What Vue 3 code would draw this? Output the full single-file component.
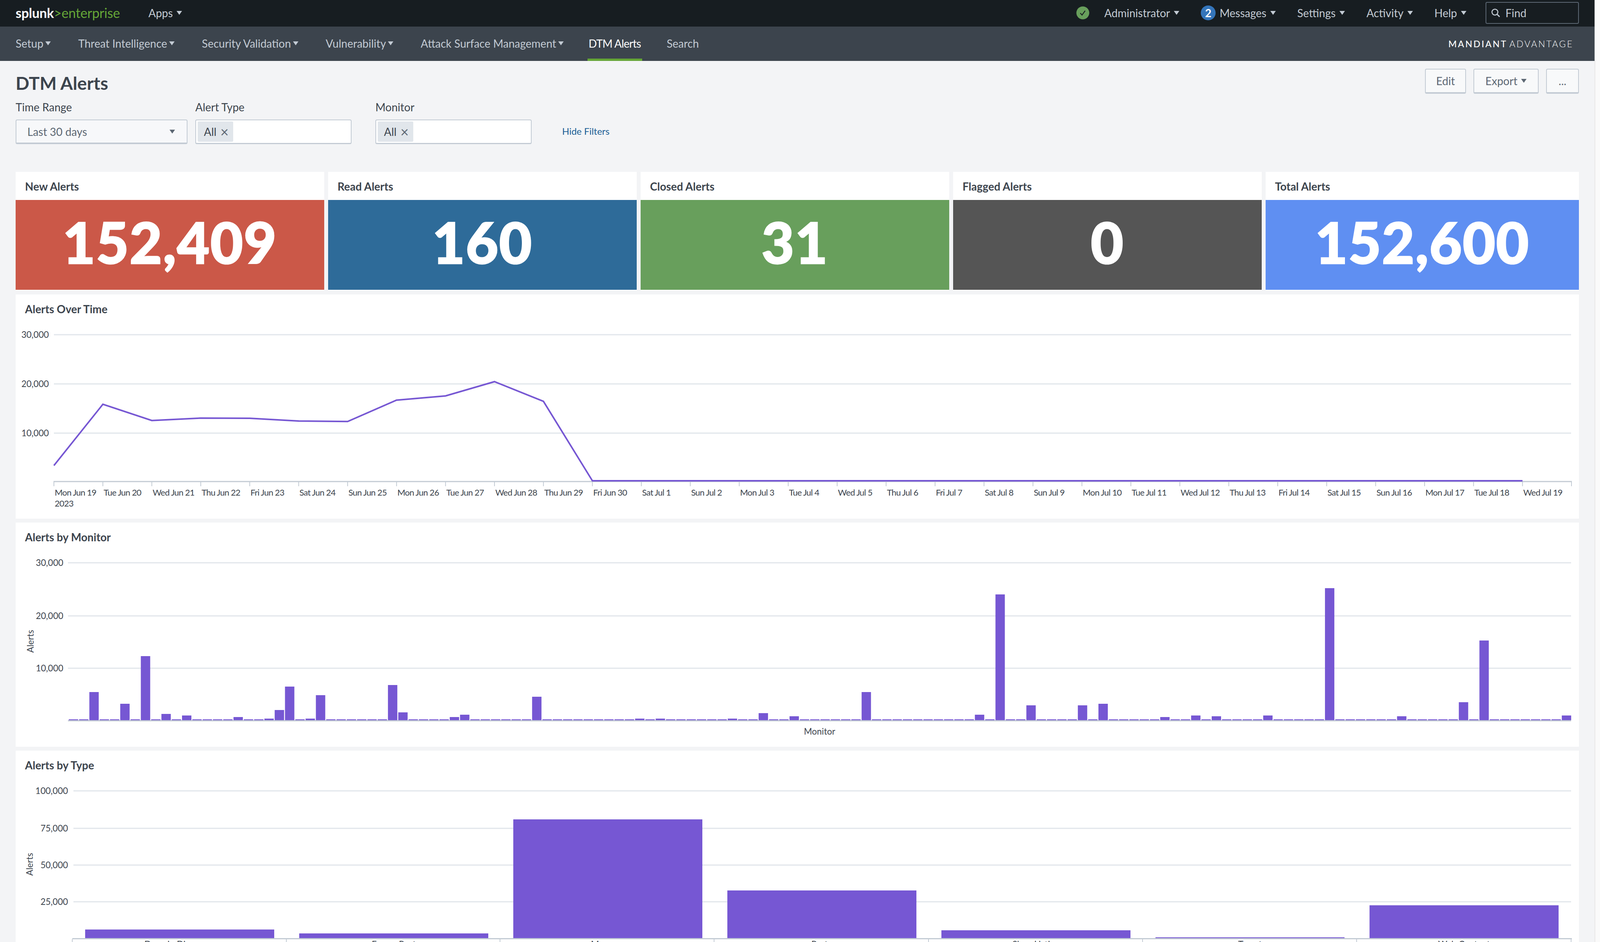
<script setup>
import { computed } from 'vue'

const mainNav = ['Setup', 'Threat Intelligence', 'Security Validation', 'Vulnerability', 'Attack Surface Management']

const stats = [
  { title: 'New Alerts', value: '152,409', color: '#cb5848' },
  { title: 'Read Alerts', value: '160', color: '#2e6b99' },
  { title: 'Closed Alerts', value: '31', color: '#689f5c' },
  { title: 'Flagged Alerts', value: '0', color: '#555555' },
  { title: 'Total Alerts', value: '152,600', color: '#5f8ff2' }
]

// Alerts over time: one point per day from Mon Jun 19
const days = ['Mon', 'Tue', 'Wed', 'Thu', 'Fri', 'Sat', 'Sun']
const timeStep = 125.32
const timeLabels = computed(() => {
  const labels = []
  for (let i = 0; i < 31; i++) {
    const date = i < 12 ? `Jun ${19 + i}` : `Jul ${i - 11}`
    labels.push({ x: 138 + i * timeStep, text: `${days[i % 7]} ${date}` })
  }
  return labels
})
const timeValues = [3250, 15700, 12400, 12900, 12850, 12300, 12200, 16550, 17400, 20300, 16300]
const timePoints = computed(() => {
  const points = []
  for (let i = 0; i < 31; i++) {
    const value = i < timeValues.length ? timeValues[i] : 160
    points.push(`${138 + i * timeStep},${1233 - (value / 10000) * 126}`)
  }
  return points.join(' ')
})

// Alerts by monitor: bar heights in px, everything else is a sliver
const monitorPeaks = {
  2: 72, 5: 42, 7: 164, 9: 16, 11: 12, 16: 8, 19: 4, 20: 26, 21: 86, 23: 4, 24: 64,
  31: 90, 32: 20, 37: 8, 38: 14, 45: 60, 55: 4, 57: 4, 64: 4, 67: 18, 70: 10, 77: 72,
  88: 14, 90: 322, 93: 38, 98: 38, 100: 42, 106: 8, 109: 12, 111: 10, 116: 12, 122: 338,
  129: 10, 135: 46, 137: 204, 145: 12
}
const monitorBars = computed(() => {
  const bars = []
  for (let i = 0; i < 146; i++) {
    const h = monitorPeaks[i] || 2.2
    bars.push({ x: 176 + i * 26.36, y: 1844 - h, h })
  }
  return bars
})

const typeBars = [
  { name: 'Domain Discovery', x: 218, w: 484, top: 2380 },
  { name: 'Forum Post', x: 766, w: 484, top: 2390 },
  { name: 'Message', x: 1314, w: 484, top: 2098 },
  { name: 'Paste', x: 1862, w: 484, top: 2280 },
  { name: 'Shop Listing', x: 2410, w: 484, top: 2382 },
  { name: 'Tweet', x: 2958, w: 484, top: 2400 },
  { name: 'Web Content', x: 3506, w: 484, top: 2318 }
]
const typeTicks = [185, 733, 1280, 1828, 2377, 2925, 3473, 4022]
</script>

<template>
  <div class="page">
    <div class="main">
      <header class="top-bar">
        <div class="logo">
          <span class="logo-splunk">splunk</span><span class="logo-enterprise">&gt;enterprise</span>
        </div>
        <div class="top-item apps">Apps<span class="caret"></span></div>
        <div class="top-right">
          <svg class="status-icon" viewBox="0 0 34 34">
            <circle cx="17" cy="17" r="16.5" fill="#689f5c" />
            <path d="M10.5 17.5l4.5 5 8-11" fill="none" stroke="#171d21" stroke-width="2.2" />
          </svg>
          <div class="top-item admin">Administrator<span class="caret"></span></div>
          <div class="top-item messages">
            <span class="badge">2</span>Messages<span class="caret"></span>
          </div>
          <div class="top-item">Settings<span class="caret"></span></div>
          <div class="top-item">Activity<span class="caret"></span></div>
          <div class="top-item">Help<span class="caret"></span></div>
          <div class="find">
            <svg class="find-icon" viewBox="0 0 24 24">
              <circle cx="10" cy="10" r="7.5" fill="none" stroke="#c3cbd4" stroke-width="2.6" />
              <path d="M15.5 15.5L22 22" stroke="#c3cbd4" stroke-width="3" />
            </svg>
            Find
          </div>
        </div>
      </header>

      <nav class="sub-bar">
        <div v-for="item in mainNav" :key="item" class="sub-item">{{ item }}<span class="caret"></span></div>
        <div class="sub-item active">DTM Alerts</div>
        <div class="sub-item search">Search</div>
        <div class="mandiant"><span class="mandiant-a">MANDIANT</span><span class="mandiant-b">ADVANTAGE</span></div>
      </nav>

      <main class="dashboard">
        <div class="title-row">
          <h1 class="page-title">DTM Alerts</h1>
          <div class="actions">
            <button class="btn btn-edit">Edit</button>
            <button class="btn btn-export">Export<span class="caret dark"></span></button>
            <button class="btn btn-more">...</button>
          </div>
        </div>

        <div class="filters">
          <div class="filter filter-time">
            <label>Time Range</label>
            <div class="select">Last 30 days<span class="caret dark"></span></div>
          </div>
          <div class="filter filter-type">
            <label>Alert Type</label>
            <div class="multi"><span class="chip">All<span class="chip-x">×</span></span></div>
          </div>
          <div class="filter filter-monitor">
            <label>Monitor</label>
            <div class="multi"><span class="chip">All<span class="chip-x">×</span></span></div>
          </div>
          <a class="hide-filters">Hide Filters</a>
        </div>

        <section class="stats">
          <div v-for="stat in stats" :key="stat.title" class="stat">
            <div class="panel-title">{{ stat.title }}</div>
            <div class="stat-value" :style="{ backgroundColor: stat.color }">{{ stat.value }}</div>
          </div>
        </section>

        <section class="panel panel-time">
          <div class="panel-title">Alerts Over Time</div>
          <svg class="chart" viewBox="40 826 4002 502" width="4002" height="502">
            <line v-for="y in [857, 983, 1109]" :key="y" class="grid" x1="138" x2="4022" :y1="y" :y2="y" />
            <text class="axis-text" x="125" y="865" text-anchor="end">30,000</text>
            <text class="axis-text" x="125" y="991" text-anchor="end">20,000</text>
            <text class="axis-text" x="125" y="1117" text-anchor="end">10,000</text>
            <line class="axis" x1="137" x2="4024" y1="1233" y2="1233" />
            <line v-for="t in timeLabels" :key="t.text" class="tick" :x1="t.x" :x2="t.x" y1="1234" y2="1245" />
            <line class="tick" x1="4023" x2="4023" y1="1234" y2="1245" />
            <polyline class="trend" :points="timePoints" />
            <text v-for="t in timeLabels" :key="t.text" class="axis-text tick-label" :x="t.x + 2" y="1269">{{ t.text }}</text>
            <text class="axis-text tick-label" x="140" y="1297">2023</text>
          </svg>
        </section>

        <section class="panel panel-monitor">
          <div class="panel-title">Alerts by Monitor</div>
          <svg class="chart" viewBox="40 1410 4002 502" width="4002" height="502">
            <line v-for="y in [1441, 1577, 1711]" :key="y" class="grid" x1="174" x2="4022" :y1="y" :y2="y" />
            <text class="axis-text" x="162" y="1449" text-anchor="end">30,000</text>
            <text class="axis-text" x="162" y="1585" text-anchor="end">20,000</text>
            <text class="axis-text" x="162" y="1719" text-anchor="end">10,000</text>
            <text class="axis-text" transform="translate(86 1642) rotate(-90)" text-anchor="middle">Alerts</text>
            <rect v-for="(b, i) in monitorBars" :key="i" class="bar" :x="b.x" :y="b.y" width="24" :height="b.h" />
            <line class="axis" x1="174" x2="4022" y1="1845.5" y2="1845.5" />
            <text class="axis-text" x="2098" y="1881" text-anchor="middle">Monitor</text>
          </svg>
        </section>

        <section class="panel panel-type">
          <div class="panel-title">Alerts by Type</div>
          <svg class="chart" viewBox="40 1994 4002 418" width="4002" height="418">
            <line v-for="y in [2025, 2121, 2215, 2309]" :key="y" class="grid" x1="188" x2="4022" :y1="y" :y2="y" />
            <text class="axis-text" x="174" y="2033" text-anchor="end">100,000</text>
            <text class="axis-text" x="174" y="2129" text-anchor="end">75,000</text>
            <text class="axis-text" x="174" y="2223" text-anchor="end">50,000</text>
            <text class="axis-text" x="174" y="2317" text-anchor="end">25,000</text>
            <text class="axis-text" transform="translate(84 2213) rotate(-90)" text-anchor="middle">Alerts</text>
            <rect v-for="b in typeBars" :key="b.name" class="bar" :x="b.x" :y="b.top" :width="b.w" :height="2402 - b.top" />
            <line class="axis" x1="185" x2="4024" y1="2403.5" y2="2403.5" />
            <line v-for="x in typeTicks" :key="x" class="tick" :x1="x" :x2="x" y1="2405" y2="2412" />
            <text v-for="b in typeBars" :key="b.name" class="axis-text" :x="b.x + b.w / 2" y="2426" text-anchor="middle">{{ b.name }}</text>
          </svg>
        </section>
      </main>
    </div>

    <div class="scrollbar"><div class="scroll-thumb"></div></div>
  </div>
</template>

<style scoped>
.page {
  display: flex;
  height: 2412px;
  overflow: hidden;
  background: #f3f4f6;
  font-family: Lato, "Liberation Sans", sans-serif;
  color: #3c444d;
}

.main {
  width: 4082px;
  flex: none;
}

.top-bar {
  display: flex;
  align-items: center;
  height: 68px;
  padding: 0 40px 3px;
  box-sizing: border-box;
  background: #171d21;
  color: #c3cbd4;
  font-size: 28px;
}

.logo {
  font-size: 34px;
  width: 340px;
  flex: none;
  letter-spacing: -0.2px;
}

.logo-splunk {
  color: #ffffff;
  font-weight: 700;
}

.logo-enterprise {
  color: #65a637;
  font-weight: 400;
}

.top-item {
  display: flex;
  align-items: center;
}

.top-right {
  display: flex;
  align-items: center;
  gap: 55px;
  margin-left: auto;
}

.status-icon {
  width: 34px;
  height: 34px;
  margin-right: -17px;
}

.badge {
  width: 38px;
  height: 38px;
  margin-right: 10px;
  border-radius: 50%;
  background: #3475ba;
  color: #ffffff;
  font-weight: 700;
  display: flex;
  align-items: center;
  justify-content: center;
}

.caret {
  width: 0;
  height: 0;
  margin-left: 10px;
  border-left: 7px solid transparent;
  border-right: 7px solid transparent;
  border-top: 10px solid currentColor;
}

.caret.dark {
  color: #5c6773;
}

.find {
  display: flex;
  align-items: center;
  width: 239px;
  height: 56px;
  margin-left: -6px;
  padding-left: 12px;
  box-sizing: border-box;
  border: 2px solid #5c6773;
  border-radius: 4px;
}

.find-icon {
  width: 24px;
  height: 24px;
  margin-right: 13px;
}

.sub-bar {
  display: flex;
  align-items: center;
  gap: 70px;
  height: 88px;
  padding: 0 54px 0 40px;
  box-sizing: border-box;
  background: #3c444d;
  color: #c3cbd4;
  font-size: 28px;
}

.sub-item {
  display: flex;
  align-items: center;
  height: 100%;
  padding-bottom: 3px;
  box-sizing: border-box;
}

.sub-item .caret {
  margin-left: 5px;
}

.sub-item.active {
  margin-left: -9px;
  padding: 0 3px 3px;
  color: #ffffff;
  letter-spacing: -0.8px;
  box-shadow: inset 0 -6px 0 #65a637;
}

.sub-item.search {
  margin-left: -7px;
}

.mandiant {
  margin-left: auto;
  font-size: 23px;
  color: #ffffff;
  letter-spacing: 3.2px;
}

.mandiant-a {
  font-weight: 500;
}

.mandiant-b {
  font-weight: 300;
  margin-left: 5px;
}

.dashboard {
  padding: 20px 40px 0;
}

.title-row {
  display: flex;
  justify-content: space-between;
  height: 64px;
}

.page-title {
  margin: 9px 0 0;
  font-size: 46px;
  line-height: 56px;
  font-weight: 700;
}

.actions {
  display: flex;
  gap: 19px;
}

.btn {
  height: 64px;
  padding: 0;
  box-sizing: border-box;
  display: flex;
  align-items: center;
  justify-content: center;
  background: #f8f9fa;
  border: 2px solid #c3cbd4;
  border-bottom-width: 4px;
  border-radius: 4px;
  color: #5c6773;
  font-family: inherit;
  font-size: 28px;
}

.btn-edit {
  width: 105px;
}

.btn-export {
  width: 167px;
}

.btn-more {
  width: 84px;
}

.filters {
  display: flex;
  align-items: flex-end;
  height: 129px;
  margin-top: 0;
}

.filter label {
  display: block;
  height: 50px;
  font-size: 28px;
  line-height: 36px;
}

.filter-time {
  width: 440px;
  margin-right: 20px;
}

.filter-type {
  width: 400px;
  margin-right: 61px;
}

.filter-monitor {
  width: 400px;
  margin-right: 78px;
}

.select,
.multi {
  display: flex;
  align-items: center;
  height: 63px;
  box-sizing: border-box;
  border: 2px solid #c3cbd4;
  border-bottom-width: 3px;
  border-radius: 4px;
  font-size: 28px;
}

.select {
  justify-content: space-between;
  padding: 0 30px 0 28px;
  background: #f7f8fa;
  color: #5c6773;
  border-bottom-width: 4px;
}

.multi {
  padding: 0 4px;
  background: #ffffff;
}

.chip {
  display: flex;
  align-items: center;
  width: 91px;
  height: 52px;
  padding-left: 16px;
  box-sizing: border-box;
  background: #e1e6eb;
  border-radius: 3px;
}

.chip-x {
  margin-left: 10px;
  font-size: 36px;
  line-height: 1;
  color: #5c6773;
}

.hide-filters {
  align-self: flex-end;
  margin-bottom: 19px;
  color: #1a5e95;
  font-size: 24px;
}

.stats {
  display: grid;
  grid-template-columns: repeat(4, 790px) 1fr;
  gap: 10px;
  margin-top: 71px;
}

.stat {
  height: 304px;
  background: #ffffff;
}

.panel-title {
  height: 72px;
  padding-left: 24px;
  font-size: 28px;
  font-weight: 700;
  line-height: 74px;
  color: #3c444d;
}

.stat-value {
  display: flex;
  align-items: center;
  justify-content: center;
  height: 230px;
  padding-bottom: 16px;
  box-sizing: border-box;
  color: #ffffff;
  font-size: 144px;
  font-weight: 900;
  letter-spacing: 2px;
  -webkit-text-stroke: 3px #ffffff;
}

.panel {
  margin-top: 10px;
  background: #ffffff;
  overflow: hidden;
}

.panel-time {
  height: 574px;
}

.panel-monitor {
  height: 574px;
}

.panel-type {
  height: 490px;
}

.chart {
  display: block;
}

.grid {
  stroke: #e1e6eb;
  stroke-width: 3;
}

.axis {
  stroke: #c3cbd4;
  stroke-width: 3;
}

.tick {
  stroke: #c3cbd4;
  stroke-width: 2;
}

.trend {
  fill: none;
  stroke: #7657d3;
  stroke-width: 4;
}

.bar {
  fill: #7657d3;
}

.axis-text {
  fill: #3c444d;
  font-size: 22.5px;
}

.tick-label {
  font-size: 22px;
  letter-spacing: -0.8px;
}

.scrollbar {
  flex: 1;
  background: #fafafa;
  border-left: 2px solid #e8e8e8;
  box-sizing: border-box;
  padding: 6px 6px 0;
}

.scroll-thumb {
  height: 1664px;
  background: #c1c1c1;
  border-radius: 8px;
}
</style>
